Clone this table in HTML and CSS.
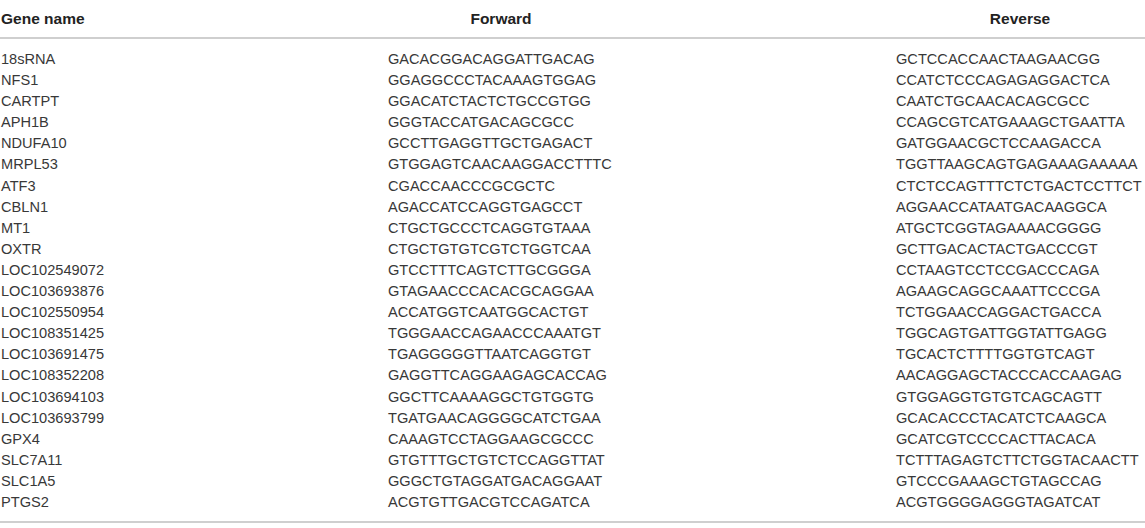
FILE: index.html
```html
<!DOCTYPE html>
<html>
  <head>
    <meta charset="utf-8" />
    <title>Primer sequences</title>
    <link rel="stylesheet" href="styles.css">
  </head>
  <body>
    <table class="primers">
      <thead>
        <tr>
          <th class="primers__gene">Gene name</th>
          <th class="primers__fwd"><span class="primers__head">Forward</span></th>
          <th class="primers__rev"><span class="primers__head">Reverse</span></th>
        </tr>
      </thead>
      <tbody>
        <tr><td>18sRNA</td><td>GACACGGACAGGATTGACAG</td><td>GCTCCACCAACTAAGAACGG</td></tr>
        <tr><td>NFS1</td><td>GGAGGCCCTACAAAGTGGAG</td><td>CCATCTCCCAGAGAGGACTCA</td></tr>
        <tr><td>CARTPT</td><td>GGACATCTACTCTGCCGTGG</td><td>CAATCTGCAACACAGCGCC</td></tr>
        <tr><td>APH1B</td><td>GGGTACCATGACAGCGCC</td><td>CCAGCGTCATGAAAGCTGAATTA</td></tr>
        <tr><td>NDUFA10</td><td>GCCTTGAGGTTGCTGAGACT</td><td>GATGGAACGCTCCAAGACCA</td></tr>
        <tr><td>MRPL53</td><td>GTGGAGTCAACAAGGACCTTTC</td><td>TGGTTAAGCAGTGAGAAAGAAAAA</td></tr>
        <tr><td>ATF3</td><td>CGACCAACCCGCGCTC</td><td>CTCTCCAGTTTCTCTGACTCCTTCT</td></tr>
        <tr><td>CBLN1</td><td>AGACCATCCAGGTGAGCCT</td><td>AGGAACCATAATGACAAGGCA</td></tr>
        <tr><td>MT1</td><td>CTGCTGCCCTCAGGTGTAAA</td><td>ATGCTCGGTAGAAAACGGGG</td></tr>
        <tr><td>OXTR</td><td>CTGCTGTGTCGTCTGGTCAA</td><td>GCTTGACACTACTGACCCGT</td></tr>
        <tr><td>LOC102549072</td><td>GTCCTTTCAGTCTTGCGGGA</td><td>CCTAAGTCCTCCGACCCAGA</td></tr>
        <tr><td>LOC103693876</td><td>GTAGAACCCACACGCAGGAA</td><td>AGAAGCAGGCAAATTCCCGA</td></tr>
        <tr><td>LOC102550954</td><td>ACCATGGTCAATGGCACTGT</td><td>TCTGGAACCAGGACTGACCA</td></tr>
        <tr><td>LOC108351425</td><td>TGGGAACCAGAACCCAAATGT</td><td>TGGCAGTGATTGGTATTGAGG</td></tr>
        <tr><td>LOC103691475</td><td>TGAGGGGGTTAATCAGGTGT</td><td>TGCACTCTTTTGGTGTCAGT</td></tr>
        <tr><td>LOC108352208</td><td>GAGGTTCAGGAAGAGCACCAG</td><td>AACAGGAGCTACCCACCAAGAG</td></tr>
        <tr><td>LOC103694103</td><td>GGCTTCAAAAGGCTGTGGTG</td><td>GTGGAGGTGTGTCAGCAGTT</td></tr>
        <tr><td>LOC103693799</td><td>TGATGAACAGGGGCATCTGAA</td><td>GCACACCCTACATCTCAAGCA</td></tr>
        <tr><td>GPX4</td><td>CAAAGTCCTAGGAAGCGCCC</td><td>GCATCGTCCCCACTTACACA</td></tr>
        <tr><td>SLC7A11</td><td>GTGTTTGCTGTCTCCAGGTTAT</td><td>TCTTTAGAGTCTTCTGGTACAACTT</td></tr>
        <tr><td>SLC1A5</td><td>GGGCTGTAGGATGACAGGAAT</td><td>GTCCCGAAAGCTGTAGCCAG</td></tr>
        <tr><td>PTGS2</td><td>ACGTGTTGACGTCCAGATCA</td><td>ACGTGGGGAGGGTAGATCAT</td></tr>
      </tbody>
    </table>
  </body>
</html>
```

FILE: styles.css
```css
body {
  margin: 0;
  background: #ffffff;
  color: #383838;
  font-family: "Liberation Sans", Arial, sans-serif;
  font-size: 14.6px;
}

.primers {
  width: 1145px;
  border-collapse: collapse;
  table-layout: fixed;
  border-bottom: 2px solid #cfcfcf;
}

.primers th {
  padding: 9px 0 9px 1px;
  font-size: 15.5px;
  font-weight: 700;
  text-align: left;
  line-height: 19px;
  color: #222222;
  border-bottom: 2px solid #cfcfcf;
}

.primers__gene {
  width: 386px;
}

.primers__fwd {
  width: 507px;
}

.primers__head {
  display: inline-block;
  text-align: center;
}

.primers__fwd .primers__head {
  width: 226px;
}

.primers__rev .primers__head {
  width: 248px;
}

.primers td {
  padding: 0 0 0 1px;
  height: 21.1px;
  line-height: 21.1px;
  white-space: nowrap;
}

.primers tbody tr:first-child td {
  padding-top: 10px;
}

.primers tbody tr:last-child td {
  padding-bottom: 8px;
}
```
